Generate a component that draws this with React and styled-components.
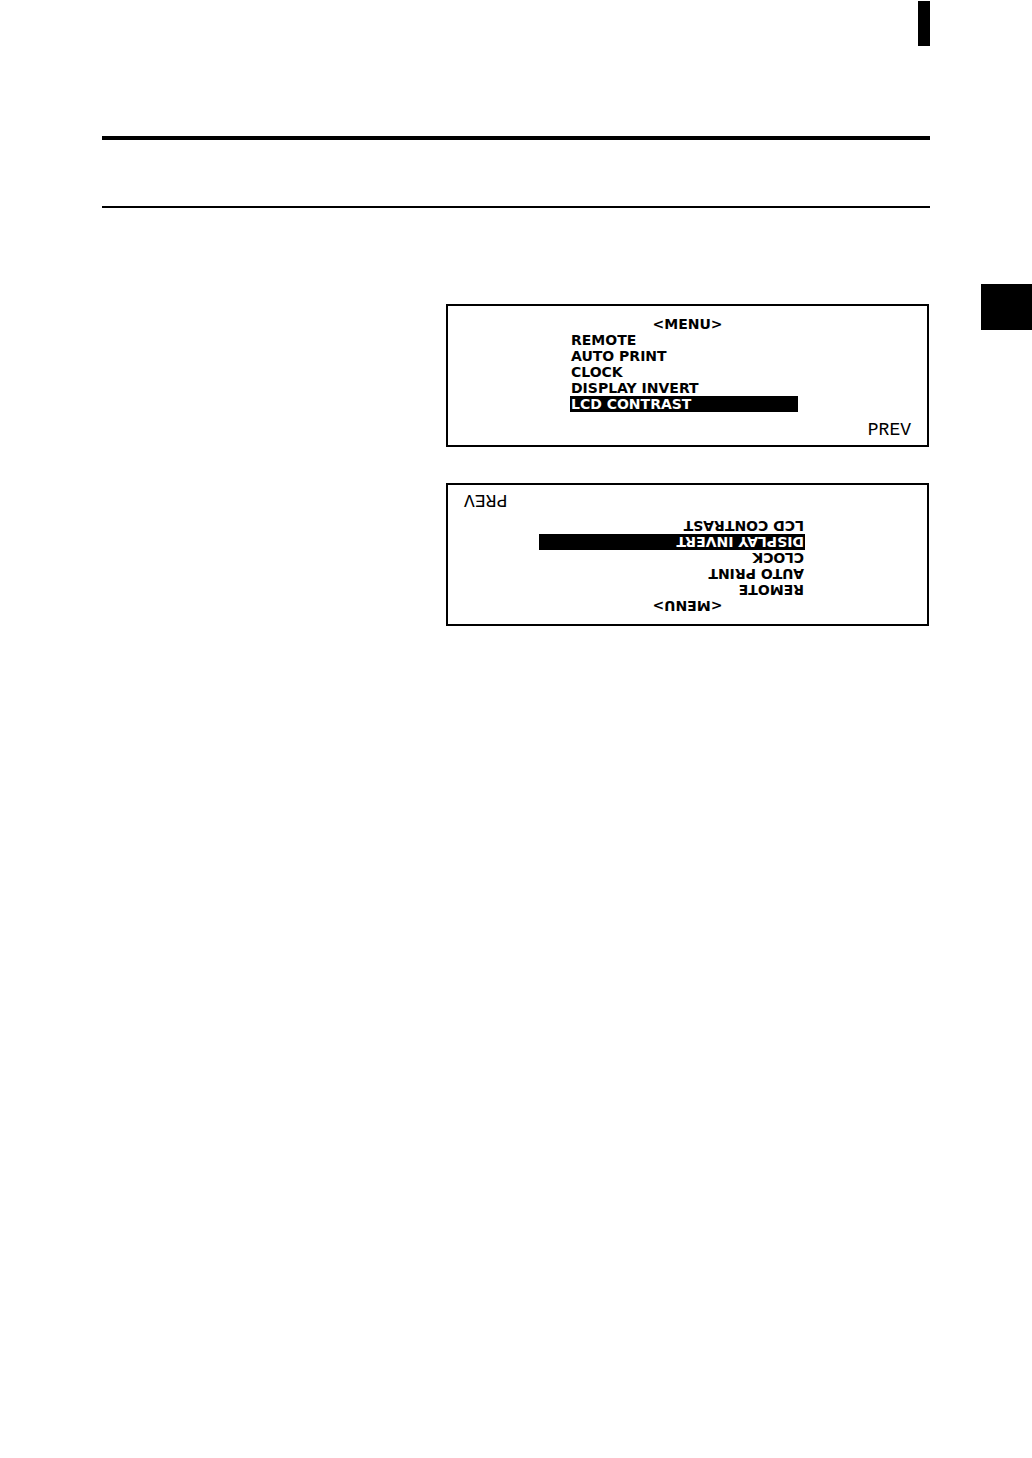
import React from "react";
import styled, { createGlobalStyle } from "styled-components";

const GlobalStyle = createGlobalStyle`
  * {
    box-sizing: border-box;
  }
  body {
    margin: 0;
    background-color: #fff;
    color: #000;
  }
`;

const Page = styled.div`
  min-height: 100vh;
  padding-top: 1px;
`;

const Header = styled.header`
  display: flex;
  flex-direction: column;
  padding: 0 102px;
`;

const Marker = styled.span`
  align-self: flex-end;
  width: 12px;
  height: 45px;
  background-color: #000;
`;

const TitleBand = styled.div`
  height: 72px;
  margin-top: 90px;
  border-top: 4px solid #000;
  border-bottom: 2px solid #000;
`;

const Body = styled.main`
  display: grid;
  grid-template-columns: minmax(0, 1fr) 51px;
  column-gap: 52px;
  align-items: start;
  padding: 76px 0 80px 446px;
`;

const Screens = styled.div`
  display: flex;
  flex-direction: column;
  gap: 36px;
  padding-top: 20px;
`;

const SideTab = styled.span`
  height: 46px;
  background-color: #000;
`;

const Lcd = styled.section`
  display: flex;
  flex-direction: column;
  padding: 10px 16px 5px;
  border: 2px solid #000;
  font-family: "DejaVu Sans", sans-serif;
  transform: ${({ $inverted }) => ($inverted ? "rotate(180deg)" : "none")};
`;

const Title = styled.h2`
  margin: 0;
  font-size: 14px;
  font-weight: 700;
  line-height: 16px;
  text-align: center;
`;

const List = styled.ul`
  margin: 0;
  padding: 0 0 0 106px;
  list-style: none;
`;

const Item = styled.li`
  display: flex;
`;

const Option = styled.button`
  width: ${({ $cells }) => $cells * 19}px;
  height: 16px;
  padding: 0 1px;
  border: 0;
  background-color: ${({ $active }) => ($active ? "#000" : "transparent")};
  color: ${({ $active }) => ($active ? "#fff" : "#000")};
  font-family: inherit;
  font-size: 14px;
  font-weight: 700;
  line-height: 16px;
  text-align: left;
  white-space: nowrap;
`;

const SoftKey = styled.button`
  align-self: flex-end;
  margin-top: 8px;
  padding: 0;
  border: 0;
  background: none;
  color: #000;
  font-family: "Liberation Mono", monospace;
  font-size: 18px;
  line-height: 20px;
`;

const options = [
  "REMOTE",
  "AUTO PRINT",
  "CLOCK",
  "DISPLAY INVERT",
  "LCD CONTRAST",
];

const MenuScreen = ({ selected, inverted }) => (
  <Lcd $inverted={inverted}>
    <Title>&lt;MENU&gt;</Title>
    <List>
      {options.map((option) => (
        <Item key={option}>
          <Option
            type="button"
            $cells={option.length}
            $active={option === selected}
          >
            {option}
          </Option>
        </Item>
      ))}
    </List>
    <SoftKey type="button">PREV</SoftKey>
  </Lcd>
);

const App = () => {
  return (
    <>
      <GlobalStyle />
      <Page>
        <Header>
          <Marker />
          <TitleBand />
        </Header>
        <Body>
          <Screens>
            <MenuScreen selected="LCD CONTRAST" />
            <MenuScreen selected="DISPLAY INVERT" inverted />
          </Screens>
          <SideTab />
        </Body>
      </Page>
    </>
  );
};

export default App;
